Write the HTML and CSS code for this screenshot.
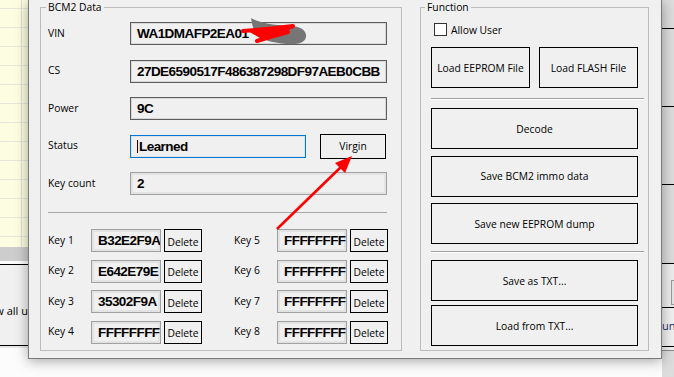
FILE: index.html
```html
<!DOCTYPE html>
<html lang="en">
<head>
    <meta charset="UTF-8">
    <title>BCM2 Data</title>
    <link rel="stylesheet" href="styles.css">
</head>
<body>
    <div class="desk">
        <!-- window behind, left side -->
        <div class="back-left">
            <div class="sheet"></div>
            <div class="band"></div>
            <div class="panel"><span>Show all u</span></div>
            <div class="panel-foot"></div>
        </div>

        <div class="center">
            <div class="dialog">
                <fieldset class="group group-data">
                    <legend>BCM2 Data</legend>
                    <div class="rows">
                        <div class="row">
                            <span class="lbl">VIN</span>
                            <div class="field field-dark">WA1DMAFP2EA01</div>
                        </div>
                        <div class="row">
                            <span class="lbl">CS</span>
                            <div class="field field-dark">27DE6590517F486387298DF97AEB0CBB</div>
                        </div>
                        <div class="row">
                            <span class="lbl">Power</span>
                            <div class="field field-dark">9C</div>
                        </div>
                        <div class="row">
                            <span class="lbl">Status</span>
                            <div class="field field-focus"><span class="caret"></span>Learned</div>
                            <button class="btn btn-virgin">Virgin</button>
                        </div>
                        <div class="row">
                            <span class="lbl">Key count</span>
                            <div class="field field-light">2</div>
                        </div>
                    </div>
                    <div class="sep"></div>
                    <div class="keys">
                        <div class="key"><span class="key-lbl">Key 1</span><div class="field key-field">B32E2F9A</div><button class="btn del">Delete</button></div>
                        <div class="key"><span class="key-lbl">Key 2</span><div class="field key-field">E642E79E</div><button class="btn del">Delete</button></div>
                        <div class="key"><span class="key-lbl">Key 3</span><div class="field key-field">35302F9A</div><button class="btn del">Delete</button></div>
                        <div class="key"><span class="key-lbl">Key 4</span><div class="field key-field">FFFFFFFF</div><button class="btn del">Delete</button></div>
                        <div class="key"><span class="key-lbl">Key 5</span><div class="field key-field">FFFFFFFF</div><button class="btn del">Delete</button></div>
                        <div class="key"><span class="key-lbl">Key 6</span><div class="field key-field">FFFFFFFF</div><button class="btn del">Delete</button></div>
                        <div class="key"><span class="key-lbl">Key 7</span><div class="field key-field">FFFFFFFF</div><button class="btn del">Delete</button></div>
                        <div class="key"><span class="key-lbl">Key 8</span><div class="field key-field">FFFFFFFF</div><button class="btn del">Delete</button></div>
                    </div>
                </fieldset>

                <fieldset class="group group-func">
                    <legend>Function</legend>
                    <label class="check"><span class="box"></span>Allow User</label>
                    <div class="pair">
                        <button class="btn">Load EEPROM File</button>
                        <button class="btn">Load FLASH File</button>
                    </div>
                    <div class="fsep"></div>
                    <div class="stack">
                        <button class="btn wide">Decode</button>
                        <button class="btn wide">Save BCM2 immo data</button>
                        <button class="btn wide">Save new EEPROM dump</button>
                    </div>
                    <div class="fsep fsep-low"></div>
                    <div class="stack stack-tight">
                        <button class="btn wide">Save as TXT...</button>
                        <button class="btn wide">Load from TXT...</button>
                    </div>
                </fieldset>
            </div>
        </div>

        <!-- window behind, right side -->
        <div class="back-right">
            <div class="r-cell r-first"></div>
            <div class="r-cell"></div>
            <div class="r-cell"></div>
            <div class="r-cell r-last"></div>
            <div class="r-tool"><span class="r-btn"></span></div>
            <div class="r-info">uni</div>
            <div class="r-foot"></div>
        </div>
    </div>

    <!-- red markup drawn over the screenshot -->
    <svg class="marks" width="674" height="377" viewBox="0 0 674 377">
        <path d="M251,18 C258,22 270,25 290,26 C301,26 307,31 306,37 C305,43 297,45 287,44 C273,43 262,40 256,34 C253,29 252,24 251,18 Z" fill="#767676"/>
        <path d="M243,31 C258,30 276,28 293,26 C281,32 268,37 257,41 C267,38 277,35 288,32" stroke="#ff0000" stroke-width="4" fill="none" stroke-linecap="round" stroke-linejoin="round"/>
        <path d="M248,31 L286,28 L260,38 Z" fill="#ff0000"/>
        <line x1="277" y1="229" x2="342" y2="166" stroke="#ff0000" stroke-width="2.5"/>
        <polygon points="352,156 345,173 335,163" fill="#ff0000"/>
    </svg>
</body>
</html>
```

FILE: styles.css
```css
html, body {
    margin: 0;
    padding: 0;
}
body {
    width: 674px;
    height: 377px;
    overflow: hidden;
    background-color: #fcfcfc;
    font-family: "Open Sans", "Noto Sans", sans-serif;
    font-size: 10.3px;
    color: #000000;
}
.desk {
    display: flex;
    height: 377px;
}

/* background window */
.back-left {
    width: 28px;
    flex: none;
    display: flex;
    flex-direction: column;
}
.sheet {
    height: 247px;
    background-image:
        linear-gradient(to right, transparent 21px, #e0e0d2 21px, #e0e0d2 22px, transparent 22px),
        repeating-linear-gradient(to bottom, #fdfde1 0, #fdfde1 18px, #e6e6da 18px, #e6e6da 19px);
    background-position: 0 0, 0 -10px;
}
.band {
    height: 14px;
    background-color: #cdcdcd;
}
.panel {
    margin-top: 3px;
    height: 82px;
    padding-top: 10px;
    box-sizing: border-box;
    border-top: 1px solid #000000;
    border-bottom: 1px solid #000000;
    background-color: #f0f0f0;
    display: flex;
    align-items: center;
    justify-content: flex-end;
    overflow: hidden;
    white-space: nowrap;
    font-size: 11px;
}
.panel-foot {
    height: 2px;
    background-color: #e6e6e6;
}
.back-right {
    width: 12px;
    flex: none;
    display: flex;
    flex-direction: column;
    background-color: #dcdcdc;
}
.r-cell {
    height: 77px;
    border-bottom: 1px solid #000000;
}
.r-first {
    height: 28px;
}
.r-last {
    height: 78px;
}
.r-tool {
    height: 44px;
    border-bottom: 1px solid #000000;
    background-color: #ececec;
    padding: 16px 0 0 9px;
    box-sizing: border-box;
}
.r-btn {
    display: block;
    height: 25px;
    border: 1px solid #9a9a9a;
    border-right: none;
    background-color: #e4e4e4;
    box-sizing: border-box;
}
.r-info {
    height: 38px;
    border-bottom: 1px solid #000000;
    background-color: #f0f0f0;
    color: #1c2a6b;
    font-size: 11px;
    line-height: 36px;
    white-space: nowrap;
    overflow: hidden;
}
.r-foot {
    height: 3px;
    border-bottom: 1px solid #8a8a8a;
    background-color: #f0f0f0;
}

/* dialog */
.center {
    width: 634px;
    flex: none;
    position: relative;
    z-index: 1;
}
.dialog {
    width: 634px;
    height: 359px;
    box-sizing: border-box;
    background-color: #f0f0f0;
    border: 1px solid #7a7a7a;
    border-top: none;
    padding: 0 12px 7px 11px;
    display: flex;
    gap: 18px;
    box-shadow: 0 2px 12px rgba(0, 0, 0, 0.35);
}
.group {
    margin: 0;
    min-width: 0;
    box-sizing: border-box;
    border: 1px solid #bcbcbc;
}
.group legend {
    font-size: 10.3px;
    line-height: 14px;
    padding: 0 2px;
}
.group-data {
    width: 362px;
    padding: 0 13px 6px 7px;
}
.group-data legend {
    margin-left: -2px;
}
.group-func {
    width: 229px;
    padding: 0 10px 3px 10px;
}
.group-func legend {
    margin-left: -6px;
}

/* data rows */
.rows {
    display: flex;
    flex-direction: column;
    gap: 14.5px;
    padding-top: 8px;
}
.row {
    display: flex;
    align-items: center;
    height: 23px;
}
.lbl {
    width: 82px;
    padding-bottom: 2px;
}
.field {
    box-sizing: border-box;
    height: 23px;
    display: flex;
    align-items: center;
    padding-left: 6px;
    background-color: #f0f0f0;
    font-family: "Liberation Sans", Arial, sans-serif;
    font-weight: bold;
    font-size: 13.5px;
    letter-spacing: -0.55px;
    overflow: hidden;
    white-space: nowrap;
}
.field-dark {
    width: 257px;
    border: 1px solid #5c5c5c;
    box-shadow: inset 0 0 0 1px #d8d8d8;
}
.field-light {
    width: 257px;
    border: 1px solid #a0a0a0;
    box-shadow: inset 0 0 0 2px #e3e3e3;
}
.field-focus {
    width: 176px;
    border: 1px solid #0078d7;
    box-shadow: inset 0 0 0 1px #e3e3e3;
}
.caret {
    width: 1px;
    height: 13px;
    background-color: #2a0000;
    margin-right: 1px;
}
.btn {
    box-sizing: border-box;
    padding: 0;
    margin: 0;
    border: 1px solid #000000;
    background-color: #f0f0f0;
    font-family: inherit;
    font-size: 10.3px;
    color: #000000;
}
.btn-virgin {
    width: 66px;
    height: 25px;
    margin-left: 14px;
}
.sep {
    width: 339px;
    height: 1px;
    margin: 17px 0 16px;
    background-color: #a8a8a8;
}
.keys {
    display: grid;
    grid-template-columns: 154px 154px;
    grid-template-rows: repeat(4, 23px);
    grid-auto-flow: column;
    column-gap: 32px;
    row-gap: 7.67px;
}
.key {
    display: flex;
    align-items: center;
}
.key-lbl {
    width: 43px;
    padding-bottom: 2px;
}
.key-field {
    width: 70px;
    border: 1px solid #a0a0a0;
    box-shadow: inset 0 0 0 2px #e3e3e3;
}
.del {
    width: 38px;
    height: 23px;
    margin-left: 3px;
    padding-top: 2px;
}

/* function panel */
.check {
    display: flex;
    align-items: center;
    gap: 4px;
    height: 13px;
    margin: 9px 0 0 3px;
}
.box {
    width: 13px;
    height: 13px;
    box-sizing: border-box;
    border: 1px solid #333333;
    background-color: #ffffff;
}
.pair {
    display: flex;
    gap: 9px;
    margin-top: 11px;
}
.pair .btn {
    flex: 1;
    height: 41px;
}
.fsep {
    height: 2px;
    box-sizing: border-box;
    margin: 10px -6px 8px 0;
    border-top: 1px solid #a0a0a0;
    border-bottom: 1px solid #ffffff;
}
.fsep-low {
    margin: 7px -6px 7px 0;
}
.stack {
    display: flex;
    flex-direction: column;
    gap: 6.5px;
}
.stack-tight {
    gap: 4px;
}
.wide {
    height: 41px;
}

/* markup overlay */
.marks {
    position: absolute;
    top: 0;
    left: 0;
    z-index: 2;
    pointer-events: none;
}
```
